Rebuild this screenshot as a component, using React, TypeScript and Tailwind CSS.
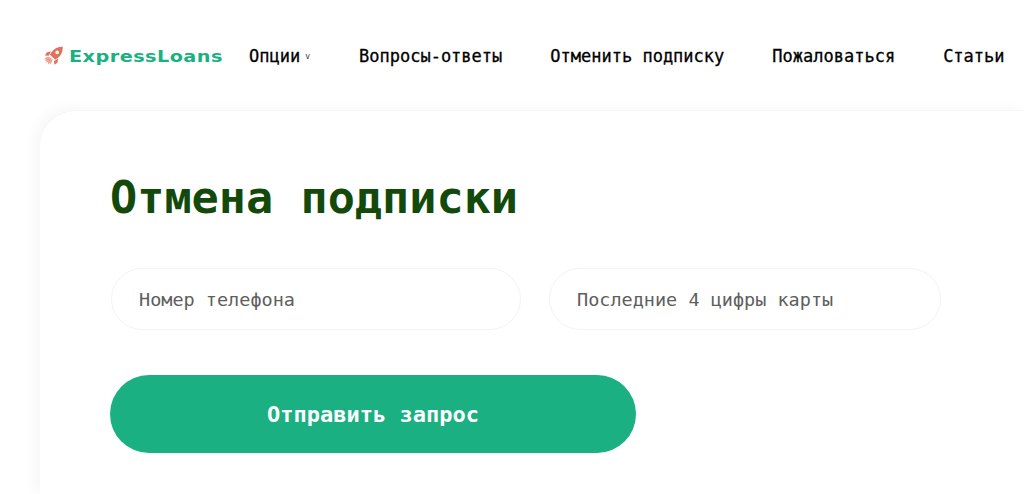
function Rocket() {
  return (
    <svg width="21" height="21" viewBox="0 0 20 20" className="shrink-0">
      <path d="M18.800 .8c-4.300-.2-7.700 1.300-10.200 4.500L6.500 8l5.100 5.100 2.800-2c3.200-2.500 4.600-6 4.400-10.300z" fill="#e36f5c" />
      <path d="M7.600 5.200 3.800 6 1.800 9l3.600.3zM14.600 12.200l-.9 3.800-2.900 1.900-.3-3.600z" fill="#e36f5c" />
      <circle cx="13.500" cy="6.100" r="1.700" fill="#fff" />
      <path d="M5.300 10.300 2.800 11 .8 12.600l2.200-.1-1.600 1.700 2.300-.4-1 2.200 2.300-.9-.3 2.400 1.800-1.400.7 1.200 1.300-2.800.9-1.300z" fill="#f0a092" />
    </svg>
  );
}

const navItems = ["Вопросы-ответы", "Отменить подписку", "Пожаловаться", "Статьи"];

export default function App() {
  return (
    <div className="w-[1024px] h-[494px] overflow-hidden bg-white font-['DejaVu_Sans_Mono',monospace]">
      <header className="h-[110px] flex items-center pl-[43px] pt-[3px]">
        <div className="flex items-center w-[206px]">
          <Rocket />
          <span className="ml-[5px] inline-block origin-left scale-x-[1.2] font-['DejaVu_Sans',sans-serif] font-bold text-[16px] tracking-[0.4px] text-[#1ab082] whitespace-nowrap">
            ExpressLoans
          </span>
        </div>
        <div className="flex items-center w-[110px] text-[17px] text-black [-webkit-text-stroke:0.3px_black]">
          Опции
          <span className="ml-[5px] text-[8px] text-[#333] [-webkit-text-stroke:0]">v</span>
        </div>
        <nav className="flex gap-[48px] text-[17px] text-black whitespace-nowrap [-webkit-text-stroke:0.3px_black]">
          {navItems.map((item) => (
            <span key={item}>{item}</span>
          ))}
        </nav>
      </header>
      <main className="ml-[40px] h-[384px] rounded-tl-[36px] bg-white border-t border-[#f6f6f6] shadow-[-6px_-2px_14px_rgba(0,0,0,0.035)] pl-[70px] pt-[58px]">
        <h1 className="text-[45.200px] leading-[58px] font-bold text-[#134a0c] whitespace-nowrap">Отмена подписки</h1>
        <form className="flex gap-[28px] mt-[41px] ml-[1px]">
          <div className="w-[410px] h-[62px] rounded-full border border-[#f3f3f3] flex items-center pl-[27px] pt-[2px] text-[18.500px] text-[#5e5e5e]">
            Номер телефона
          </div>
          <div className="w-[392px] h-[62px] rounded-full border border-[#f3f3f3] flex items-center pl-[27px] pt-[2px] text-[18.500px] text-[#5e5e5e]">
            Последние 4 цифры карты
          </div>
        </form>
        <button className="mt-[45px] w-[526px] h-[78px] rounded-full bg-[#1ab082] text-white text-[22px] font-bold flex items-center justify-center">
          Отправить запрос
        </button>
      </main>
    </div>
  );
}
